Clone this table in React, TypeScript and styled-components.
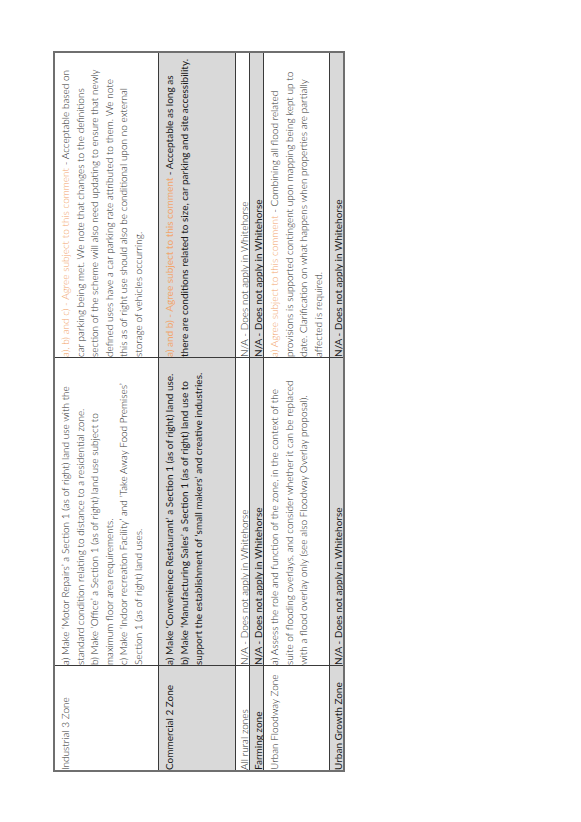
import { FC } from 'react';
import styled, { createGlobalStyle } from 'styled-components';

interface IZoneRow {
  zone: string;
  proposal: string[];
  note?: string;
  response: string[];
  shaded: boolean;
  compact?: boolean;
}

const NA = 'N/A - Does not apply in Whitehorse';

const rows: IZoneRow[] = [
  {
    zone: 'Industrial 3 Zone',
    proposal: [
      'a) Make \u2018Motor Repairs\u2019 a Section 1 (as of right) land use with the',
      'standard condition relating to distance to a residential zone.',
      'b) Make \u2018Office\u2019 a Section 1 (as of right) land use subject to',
      'maximum floor area requirements.',
      'c) Make \u2018Indoor recreation Facility\u2019 and \u2018Take Away Food Premises\u2019',
      'Section 1 (as of right) land uses.',
    ],
    note: 'a), b) and c) - Agree subject to this comment',
    response: [
      ' - Acceptable based on',
      'car parking being met. We note that changes to the definitions',
      'section of the scheme will also need updating to ensure that newly',
      'defined uses have a car parking rate attributed to them. We note',
      'this as of right use should also be conditional upon no external',
      'storage of vehicles occurring.',
    ],
    shaded: false,
  },
  {
    zone: 'Commercial 2 Zone',
    proposal: [
      'a) Make \u2018Convenience Restaurant\u2019 a Section 1 (as of right) land use.',
      'b) Make \u2018Manufacturing Sales\u2019 a Section 1 (as of right) land use to',
      'support the establishment of \u2018small makers\u2019 and creative industries.',
    ],
    note: 'a) and b) - Agree subject to this comment',
    response: [
      ' - Acceptable as long as',
      'there are conditions related to size, car parking and site accessibility.',
    ],
    shaded: true,
  },
  { zone: 'All rural zones', proposal: [NA], response: [NA], shaded: false, compact: true },
  { zone: 'Farming zone', proposal: [NA], response: [NA], shaded: true, compact: true },
  {
    zone: 'Urban Floodway Zone',
    proposal: [
      'a) Assess the role and function of the zone, in the context of the',
      'suite of flooding overlays, and consider whether it can be replaced',
      'with a flood overlay only (see also Floodway Overlay proposal).',
    ],
    note: 'a) Agree subject to this comment',
    response: [
      ' - Combining all flood related',
      'provisions is supported contingent upon mapping being kept up to',
      'date. Clarification on what happens when properties are partially',
      'affected is required.',
    ],
    shaded: false,
  },
  { zone: 'Urban Growth Zone', proposal: [NA], response: [NA], shaded: true, compact: true },
];

const App: FC = () => {
  return (
    <>
      <GlobalStyle />
      <Page>
        <Sheet>
          {rows.map((row) => (
            <Row key={row.zone}>
              <Cell $shaded={row.shaded} $compact={row.compact}>
                <Line>{row.zone}</Line>
              </Cell>
              <Cell $shaded={row.shaded} $compact={row.compact}>
                {row.proposal.map((line) => (
                  <Line key={line}>{line}</Line>
                ))}
              </Cell>
              <Cell $shaded={row.shaded} $compact={row.compact}>
                {row.response.map((line, i) => (
                  <Line key={line}>
                    {i === 0 && row.note && <Note>{row.note}</Note>}
                    {line}
                  </Line>
                ))}
              </Cell>
            </Row>
          ))}
        </Sheet>
      </Page>
    </>
  );
};

export default App;

const GlobalStyle = createGlobalStyle`
  body {
    margin: 0;
    background: #ffffff;
  }
`;

const Page = styled.div`
  padding: 51px 0 0 53px;
`;

// the sheet is laid out in vertical-rl and turned half a round,
// so rows run left to right and text reads bottom to top
const Sheet = styled.div`
  box-sizing: border-box;
  width: 292px;
  height: 721px;
  writing-mode: vertical-rl;
  text-orientation: sideways;
  transform: rotate(180deg);
  display: grid;
  grid-template-columns: 104px 307px 304px;
  grid-template-rows: 103px 76px 13px 13px 65px 13px;
  gap: 1px;
  background: #3a3a3a;
  border: 2px solid #6f6f6f;
`;

const Row = styled.div`
  display: contents;
`;

const Cell = styled.div<{ $shaded: boolean; $compact?: boolean }>`
  padding: 0 3px;
  overflow: hidden;
  background: ${({ $shaded }) => ($shaded ? '#d9d9d9' : '#ffffff')};
  color: ${({ $shaded }) => ($shaded ? '#1a1a1a' : '#2a2a2a')};
  font-family: Lato, 'Liberation Sans', sans-serif;
  font-weight: ${({ $shaded }) => ($shaded ? 400 : 300)};
  font-size: 10px;
  line-height: ${({ $compact }) => ($compact ? '10.5px' : '14.5px')};
`;

const Line = styled.div`
  white-space: nowrap;
`;

const Note = styled.span`
  color: #f2a56c;
`;
